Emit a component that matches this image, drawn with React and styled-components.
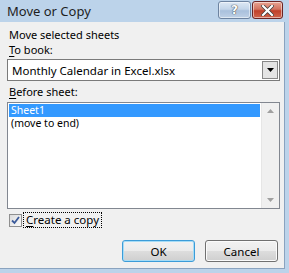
import styled, { createGlobalStyle } from "styled-components";

const GlobalStyle = createGlobalStyle`
  html, body { margin: 0; padding: 0; background: #f0f0f0; }
  body { font-family: "Noto Sans", "Open Sans", sans-serif; font-size: 11px; color: #000; }
`;

const Frame = styled.div`
  width: 289px;
  height: 273px;
  box-sizing: border-box;
  display: flex;
  flex-direction: column;
  background: #bcd3ea;
  padding: 0 4px 4px 0;
  overflow: hidden;
`;

const TitleBar = styled.div`
  height: 22px;
  flex: none;
  display: flex;
  align-items: flex-start;
  padding: 0 2px 0 7px;
  font-size: 13px;
  color: #1e1e1e;
`;

const TitleText = styled.span`
  flex: 1;
  line-height: 20px;
  margin-top: 1px;
`;

const CaptionButton = styled.div`
  width: ${(p) => p.$w}px;
  height: 18px;
  margin-top: 1px;
  margin-left: ${(p) => p.$ml || 0}px;
  border: 1px solid ${(p) => (p.$red ? "#6b2424" : "#6d83a0")};
  border-radius: 3px;
  box-sizing: border-box;
  display: flex;
  align-items: center;
  justify-content: center;
  background: ${(p) =>
    p.$red
      ? "linear-gradient(#e8a493 0%, #d2735f 45%, #c0402a 55%, #d0644c 100%)"
      : "linear-gradient(#dde8f4 0%, #c3d5e9 45%, #a9c0dc 55%, #bfd1e6 100%)"};
  box-shadow: inset 0 0 0 1px rgba(255, 255, 255, 0.5);
  color: #fff;
  font-family: "DejaVu Sans", sans-serif;
  font-weight: bold;
  font-size: 12px;
  text-shadow: 0 0 1px #333, 0 0 1px #333;
`;

const Body = styled.div`
  flex: 1;
  background: #f0f0f0;
  border-right: 1px solid #8aa3bf;
  border-bottom: 1px solid #8aa3bf;
  padding: 4px 0 0 7px;
  display: flex;
  flex-direction: column;
`;

const Label = styled.div`
  height: 15px;
  line-height: 15px;
  padding-left: 2px;
  margin-top: ${(p) => p.$mt || 0}px;
`;

const Key = styled.span`
  text-decoration: underline;
  text-underline-offset: 2px;
`;

const Combo = styled.div`
  width: 273px;
  height: 22px;
  margin-top: 2px;
  box-sizing: border-box;
  border: 1px solid #7a7a7a;
  background: #fff;
  display: flex;
  align-items: center;
  padding: 0 1px 0 4px;
  font-size: 11.5px;
`;

const ComboText = styled.span`
  flex: 1;
`;

const DropButton = styled.div`
  width: 16px;
  height: 18px;
  box-sizing: border-box;
  border: 1px solid #888;
  background: #e4e4e4;
  display: flex;
  align-items: center;
  justify-content: center;
`;

const List = styled.div`
  width: 273px;
  height: 107px;
  margin-top: 3px;
  box-sizing: border-box;
  border: 1px solid #828790;
  background: #fff;
  display: flex;
`;

const Items = styled.div`
  flex: 1;
  padding: 1px 1px 0 1px;
`;

const Item = styled.div`
  height: 13px;
  line-height: 13px;
  padding-left: 2px;
  font-size: 10.5px;
  background: ${(p) => (p.$sel ? "#3399ff" : "transparent")};
  color: ${(p) => (p.$sel ? "#fff" : "#000")};
`;

const Scroll = styled.div`
  width: 17px;
  background: #f0f0f0;
  border-left: 1px solid #e6e6e6;
  display: flex;
  flex-direction: column;
  justify-content: space-between;
  align-items: center;
  padding: 6px 0;
`;

const CheckRow = styled.div`
  display: flex;
  align-items: center;
  margin-top: 4px;
  padding-left: 2px;
  height: 14px;
`;

const Box = styled.div`
  width: 13px;
  height: 13px;
  box-sizing: border-box;
  border: 1px solid #8f8f8f;
  background: linear-gradient(135deg, #dcdcdc, #fafafa);
  display: flex;
  align-items: center;
  justify-content: center;
`;

const CheckLabel = styled.span`
  margin-left: 2px;
  padding: 0 2px;
  height: 14px;
  line-height: 14px;
  outline: 1px dotted #000;
  font-size: 11.5px;
`;

const Buttons = styled.div`
  display: flex;
  justify-content: flex-end;
  gap: 10px;
  margin-top: 13px;
  padding-right: 6px;
`;

const Button = styled.div`
  width: 73px;
  height: 22px;
  box-sizing: border-box;
  border: 1px solid ${(p) => (p.$def ? "#3c9cd8" : "#707070")};
  border-radius: 3px;
  box-shadow: ${(p) => (p.$def ? "inset 0 0 0 1px #a6dcf6" : "inset 0 0 0 1px #fbfbfb")};
  background: linear-gradient(#f2f2f2 0%, #ebebeb 50%, #dddddd 51%, #cfcfcf 100%);
  display: flex;
  align-items: center;
  justify-content: center;
  font-size: 11.5px;
`;

export default function App() {
  return (
    <>
      <GlobalStyle />
      <Frame>
        <TitleBar>
          <TitleText>Move or Copy</TitleText>
          <CaptionButton $w={33}>?</CaptionButton>
          <CaptionButton $w={31} $ml={1} $red>
            <svg width="13" height="11" viewBox="0 0 13 11">
              <path d="M2 1 L11 10 M11 1 L2 10" stroke="#3a3a3a" strokeWidth="3.6" strokeLinecap="square" />
              <path d="M2 1 L11 10 M11 1 L2 10" stroke="#fff" strokeWidth="2.2" strokeLinecap="square" />
            </svg>
          </CaptionButton>
        </TitleBar>
        <Body>
          <Label $mt={1}>Move selected sheets</Label>
          <Label><Key>T</Key>o book:</Label>
          <Combo>
            <ComboText>Monthly Calendar in Excel.xlsx</ComboText>
            <DropButton>
              <svg width="7" height="4" viewBox="0 0 7 4">
                <path d="M0 0 H7 L3.5 4 Z" fill="#000" />
              </svg>
            </DropButton>
          </Combo>
          <Label $mt={3}><Key>B</Key>efore sheet:</Label>
          <List>
            <Items>
              <Item $sel>Sheet1</Item>
              <Item>(move to end)</Item>
            </Items>
            <Scroll>
              <svg width="7" height="4" viewBox="0 0 7 4">
                <path d="M0 4 H7 L3.5 0 Z" fill="#a0a0a0" />
              </svg>
              <svg width="7" height="4" viewBox="0 0 7 4">
                <path d="M0 0 H7 L3.5 4 Z" fill="#a0a0a0" />
              </svg>
            </Scroll>
          </List>
          <CheckRow>
            <Box>
              <svg width="9" height="9" viewBox="0 0 9 9">
                <path d="M1 4.5 L3.5 7 L8 1" stroke="#3b5a9a" strokeWidth="1.8" fill="none" />
              </svg>
            </Box>
            <CheckLabel><Key>C</Key>reate a copy</CheckLabel>
          </CheckRow>
          <Buttons>
            <Button $def>OK</Button>
            <Button>Cancel</Button>
          </Buttons>
        </Body>
      </Frame>
    </>
  );
}
